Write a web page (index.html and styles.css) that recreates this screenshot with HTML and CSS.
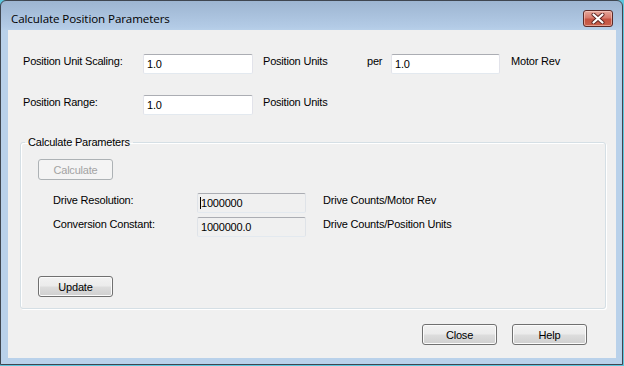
FILE: index.html
```html
<!DOCTYPE html>
<html lang="en">
<head>
    <meta charset="UTF-8">
    <meta name="viewport" content="width=device-width, initial-scale=1.0">
    <title>Calculate Position Parameters</title>
    <link rel="stylesheet" href="styles.css">
</head>
<body>
    <div class="window">
        <div class="titlebar">
            <span class="title">Calculate Position Parameters</span>
            <button class="close-x" aria-label="Close">
                <svg width="14" height="11" viewBox="0 0 14 11">
                    <path d="M2.5 1.5 L11.5 9.5 M11.5 1.5 L2.5 9.5" stroke="#5a2320" stroke-width="4" stroke-linecap="round"/>
                    <path d="M2.5 1.5 L11.5 9.5 M11.5 1.5 L2.5 9.5" stroke="#fff" stroke-width="2.2" stroke-linecap="round"/>
                </svg>
            </button>
        </div>

        <div class="client">
            <div class="row row-first">
                <label class="lbl" for="scaling">Position Unit Scaling:</label>
                <input class="txt" id="scaling" type="text" value="1.0">
                <span class="unit">Position Units</span>
                <span class="per">per</span>
                <input class="txt txt-rev" id="rev" type="text" value="1.0">
                <span class="unit-rev">Motor Rev</span>
            </div>

            <div class="row">
                <label class="lbl" for="range">Position Range:</label>
                <input class="txt" id="range" type="text" value="1.0">
                <span class="unit">Position Units</span>
            </div>

            <fieldset class="group">
                <legend>Calculate Parameters</legend>
                <button class="btn btn-calc" disabled>Calculate</button>

                <div class="calc-row calc-first">
                    <span class="calc-lbl">Drive Resolution:</span>
                    <span class="caret-wrap"><input class="txt txt-ro" type="text" value="1000000" readonly></span>
                    <span class="calc-unit">Drive Counts/Motor Rev</span>
                </div>
                <div class="calc-row">
                    <span class="calc-lbl">Conversion Constant:</span>
                    <input class="txt txt-ro" type="text" value="1000000.0" readonly>
                    <span class="calc-unit">Drive Counts/Position Units</span>
                </div>

                <button class="btn btn-update">Update</button>
            </fieldset>

            <div class="actions">
                <button class="btn">Close</button>
                <button class="btn">Help</button>
            </div>
        </div>
    </div>
</body>
</html>
```

FILE: styles.css
```css
html, body {
    margin: 0;
    padding: 0;
}

body {
    width: 624px;
    height: 366px;
    background-color: #5cc6de;
    font-family: "Liberation Sans", Arial, sans-serif;
    font-size: 11px;
    letter-spacing: -0.2px;
    color: #000;
    overflow: hidden;
}

.window {
    width: 623px;
    height: 365px;
    box-sizing: border-box;
    border: 1px solid #3f4650;
    border-radius: 6px 6px 0 0;
    padding: 0 6px 6px 7px;
    background: linear-gradient(#9db5d1 0px, #b3cbe6 26px, #b9d1ea 30px, #b9d1ea 100%);
    display: flex;
    flex-direction: column;
}

.titlebar {
    height: 29px;
    display: flex;
    justify-content: space-between;
    align-items: flex-start;
    padding: 0 3px;
}

.title {
    font-family: "Open Sans", "Noto Sans", sans-serif;
    font-size: 11.6px;
    letter-spacing: -0.1px;
    line-height: 16px;
    margin-top: 10px;
    color: #000;
}

.close-x {
    width: 30px;
    height: 17px;
    margin-top: 9px;
    padding: 0;
    border: 1px solid #5b2a28;
    border-radius: 3px;
    background: linear-gradient(#e6a89c 0%, #d77a6c 45%, #c55241 55%, #c8604c 100%);
    box-shadow: inset 0 0 0 1px rgba(255, 220, 210, 0.5);
    display: flex;
    align-items: center;
    justify-content: center;
}

.client {
    flex: 1;
    background-color: #f0f0f0;
}

.row {
    display: flex;
    align-items: flex-start;
    padding-left: 15px;
    margin-top: 21px;
}

.row-first {
    margin-top: 24px;
}

.lbl {
    width: 120px;
    line-height: 13px;
    padding-top: 1px;
}

.unit {
    width: 104px;
    margin-left: 10px;
    line-height: 13px;
    padding-top: 1px;
}

.per {
    width: 24px;
    line-height: 13px;
    padding-top: 1px;
}

.unit-rev {
    margin-left: 11px;
    line-height: 13px;
    padding-top: 1px;
}

.txt {
    width: 110px;
    height: 20px;
    box-sizing: border-box;
    margin: 0;
    padding: 0 3px;
    border: 1px solid;
    border-color: #abadb3 #e2e3ea #e3e9ef #e2e3ea;
    border-radius: 2px;
    background-color: #fff;
    font-family: "Liberation Sans", Arial, sans-serif;
    font-size: 11px;
    letter-spacing: -0.2px;
    color: #000;
    outline: none;
}

.txt-rev {
    width: 109px;
}

.txt-ro {
    width: 109px;
    background-color: #f0f0f0;
    border-color: #abadb3 #dfe3e8 #e3e9ef #dfe3e8;
}

.group {
    width: 586px;
    box-sizing: border-box;
    min-width: 0;
    margin: 21px 0 0 12px;
    padding: 0 0 11px 0;
    border: 1px solid #d5dfe5;
    border-radius: 3px;
    box-shadow: 1px 1px 0 #fff, inset 1px 1px 0 #fff;
}

.group legend {
    margin-left: 4px;
    padding: 0 3px;
    line-height: 13px;
}

.btn {
    display: block;
    width: 75px;
    height: 21px;
    box-sizing: border-box;
    margin: 0;
    padding: 0;
    border: 1px solid #707070;
    border-radius: 3px;
    background: linear-gradient(#f2f2f2 0%, #ebebeb 48%, #dddddd 52%, #cfcfcf 100%);
    box-shadow: inset 0 0 0 1px #fbfbfb;
    font-family: "Liberation Sans", Arial, sans-serif;
    font-size: 11px;
    letter-spacing: -0.2px;
    color: #000;
}

.btn:disabled {
    border-color: #adb2b5;
    background: #f4f4f4;
    box-shadow: none;
    color: #a3a3a3;
}

.btn-calc {
    margin: 10px 0 0 17px;
}

.btn-update {
    margin: 39px 0 0 17px;
}

.calc-row {
    display: flex;
    align-items: flex-start;
    padding-left: 32px;
    margin-top: 4px;
}

.calc-first {
    margin-top: 13px;
}

.calc-lbl {
    width: 144px;
    line-height: 13px;
    padding-top: 1px;
}

.calc-unit {
    margin-left: 17px;
    line-height: 13px;
    padding-top: 1px;
}

.caret-wrap {
    position: relative;
    display: block;
    height: 20px;
}

.caret-wrap::after {
    content: "";
    position: absolute;
    left: 3px;
    top: 4px;
    width: 1px;
    height: 12px;
    background-color: #000;
}

.actions {
    display: flex;
    justify-content: flex-end;
    gap: 15px;
    padding-right: 29px;
    margin-top: 15px;
}
```
